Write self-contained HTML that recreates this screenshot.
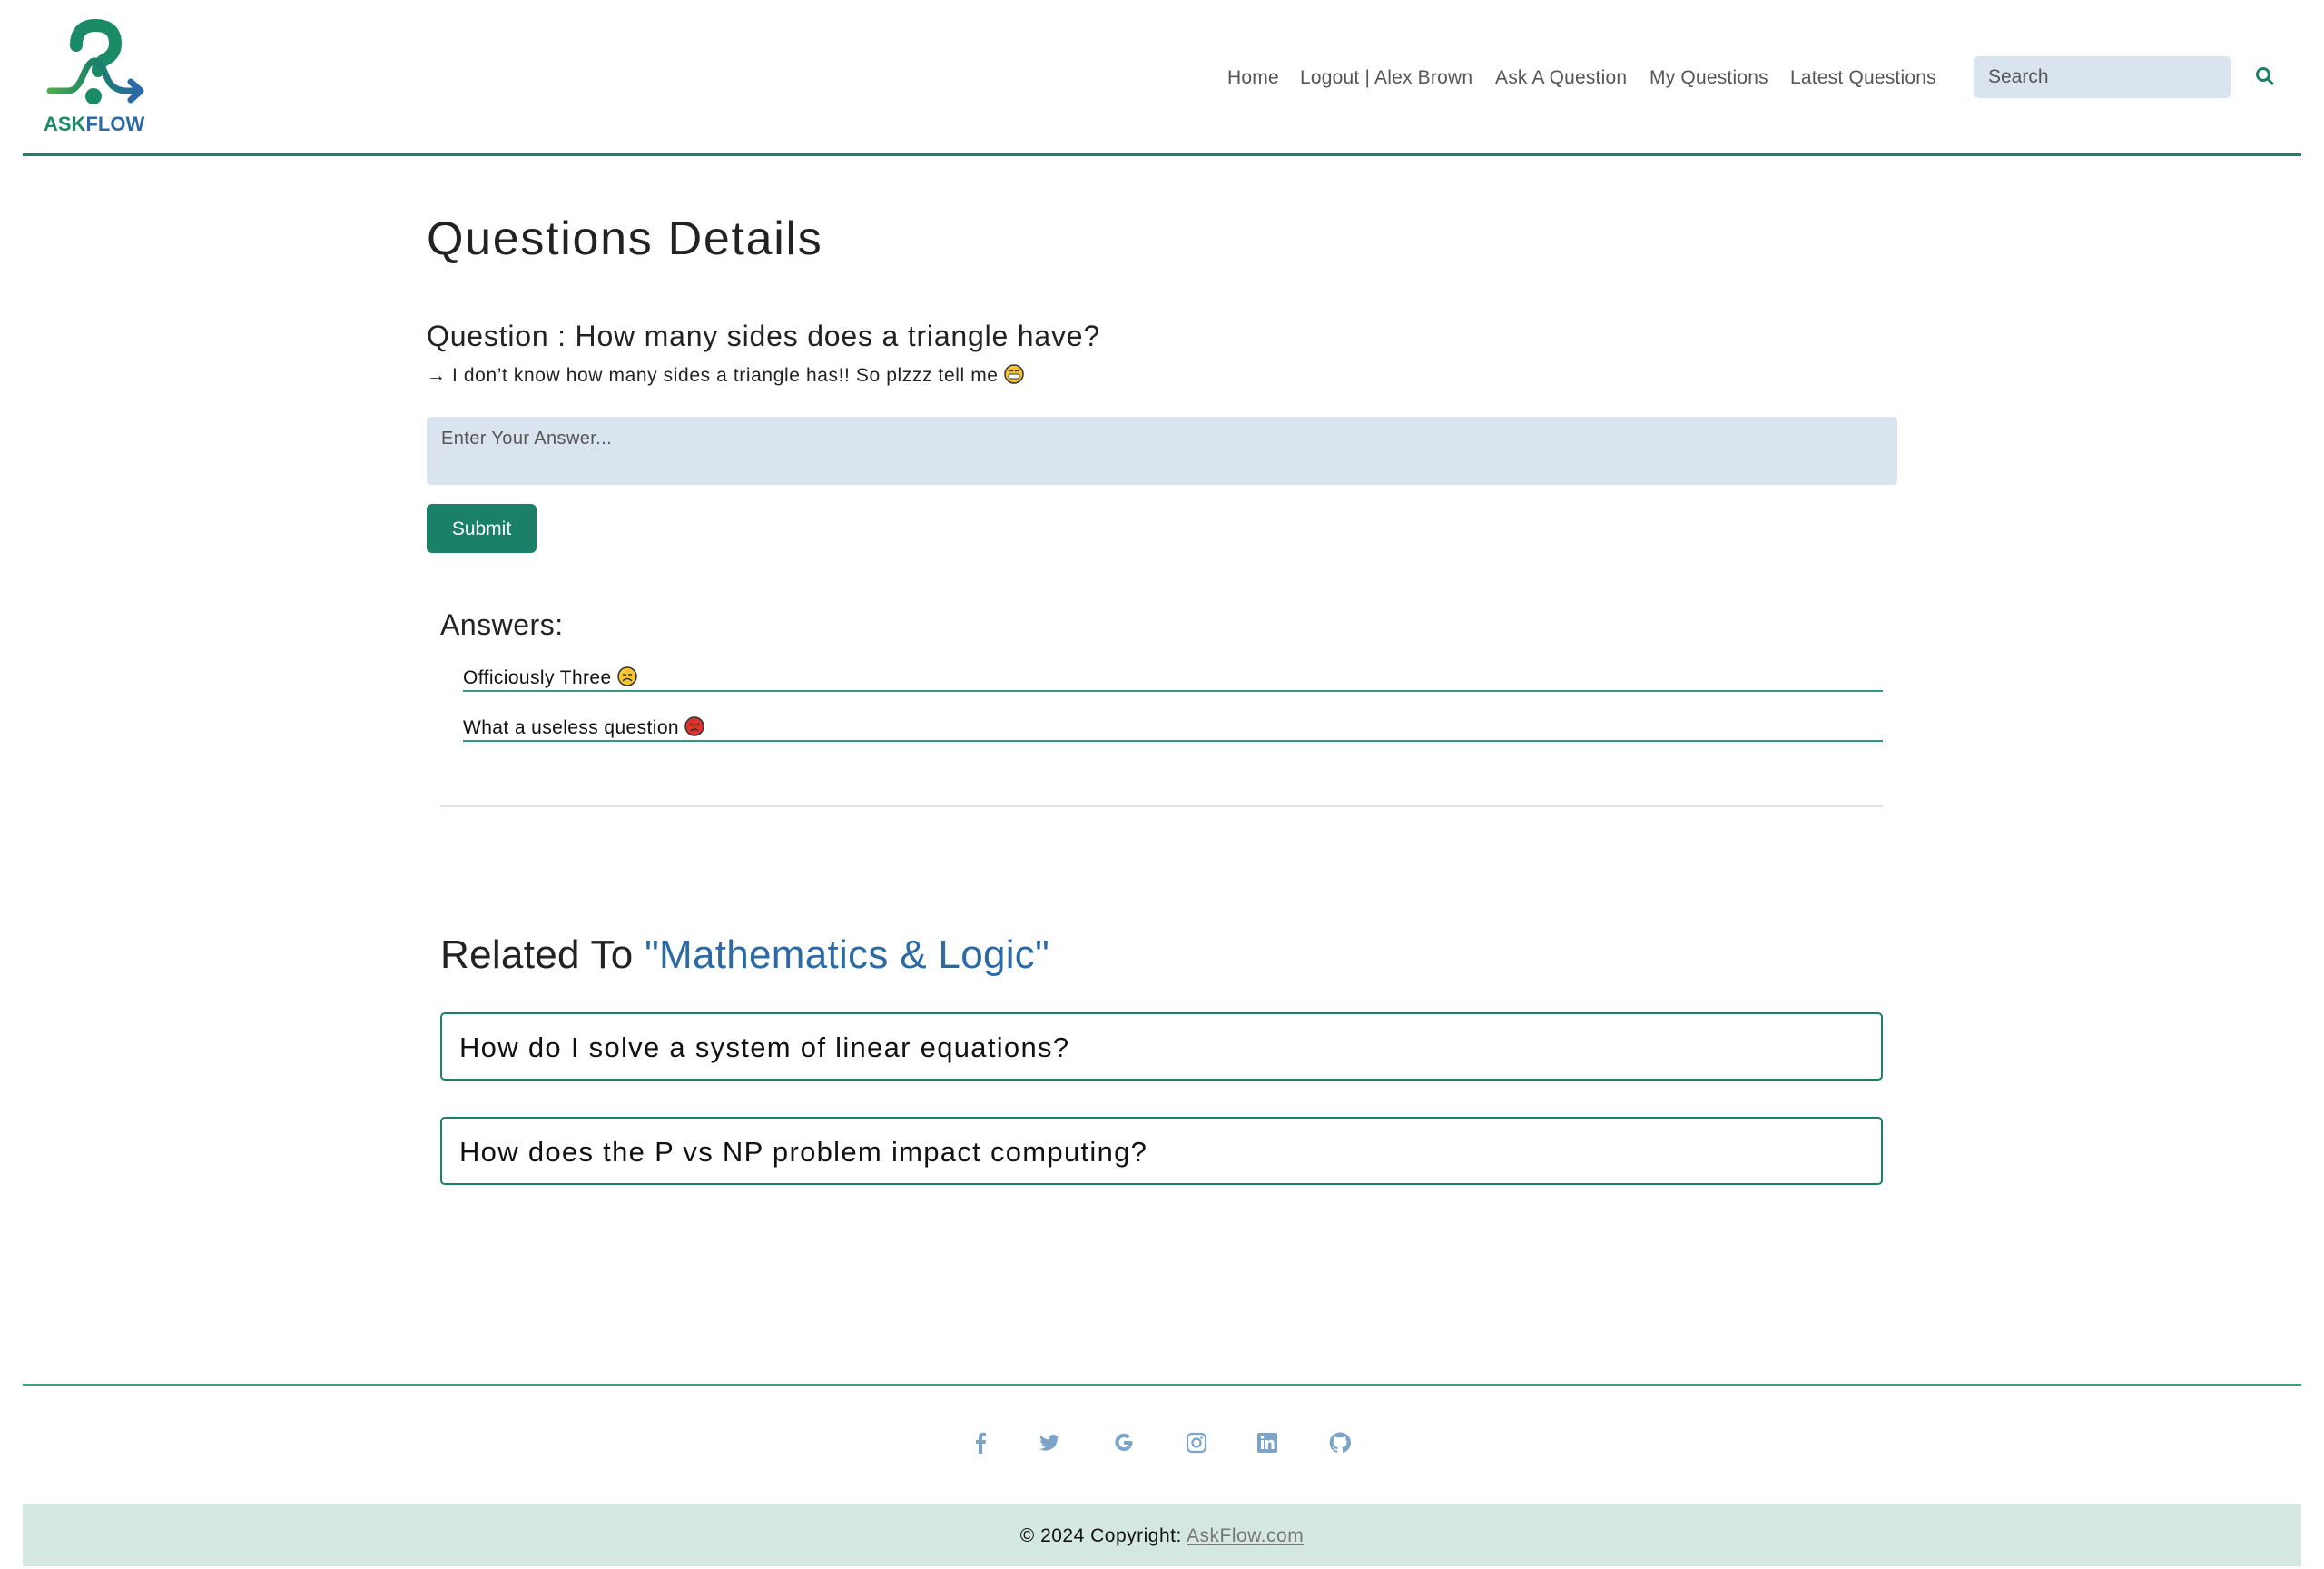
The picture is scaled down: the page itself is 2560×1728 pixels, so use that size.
<!DOCTYPE html>
<html><head><meta charset="utf-8"><style>
*{margin:0;padding:0;box-sizing:border-box}
body{width:2560px;height:1728px;background:#fff;font-family:"Liberation Sans",sans-serif;color:#222;position:relative;overflow:hidden}
.a{position:absolute;white-space:nowrap}
.nav{top:74px;font-size:21px;color:#555;letter-spacing:0.2px}
.emo{display:inline-block;width:22px;height:22px;vertical-align:-3px;margin-left:6px}
.box{position:absolute;left:485px;width:1589px;height:75px;border:2px solid #1b8068;border-radius:5px;font-size:31px;padding-left:19px;line-height:73px;color:#111;letter-spacing:1.3px}
.ic{position:absolute;top:1577px;width:24px;height:24px}
</style></head><body>
<svg class="a" style="left:45px;top:20px" width="120" height="105" viewBox="0 0 120 105">
<defs><linearGradient id="g" x1="0" x2="1"><stop offset="0" stop-color="#4cae4c"/><stop offset=".5" stop-color="#1b8068"/><stop offset="1" stop-color="#2b6aa5"/></linearGradient></defs>
<path d="M39 30 Q39 8 60 8 Q82 8 82 28 Q82 40 70 46 Q63 50 63 58" fill="none" stroke="#1b8a66" stroke-width="14" stroke-linecap="round"/>
<path d="M10 80 H30 Q40 80 47 62 Q55 43 62 48 Q68 52 73 66 Q79 80 95 80 H108" fill="none" stroke="url(#g)" stroke-width="7" stroke-linecap="round"/>
<path d="M99 70 L110 80 L99 90" fill="none" stroke="#2b6aa5" stroke-width="7" stroke-linecap="round" stroke-linejoin="round"/>
<circle cx="58" cy="86" r="9" fill="#1b8a66"/>
</svg>
<div class="a" style="left:48px;top:124px;font-size:22px;font-weight:bold"><span style="color:#1b8a66">ASK</span><span style="color:#2b6aa5">FLOW</span></div>
<div class="a" style="left:25px;top:169px;width:2510px;height:3px;background:#1b8068"></div>
<div class="a nav" style="left:1352px">Home</div>
<div class="a nav" style="left:1432px">Logout | Alex Brown</div>
<div class="a nav" style="left:1647px">Ask A Question</div>
<div class="a nav" style="left:1817px">My Questions</div>
<div class="a nav" style="left:1972px">Latest Questions</div>
<div class="a" style="left:2174px;top:62px;width:284px;height:46px;background:#d9e4ee;border-radius:6px;font-size:21px;color:#555;padding:11px 16px">Search</div>
<svg class="a" style="left:2484px;top:73px" width="22" height="22" viewBox="0 0 22 22"><circle cx="9" cy="9" r="6.5" fill="none" stroke="#1b8068" stroke-width="3"/><path d="M14 14 L19 19" stroke="#1b8068" stroke-width="3" stroke-linecap="round"/></svg>

<div class="a" style="left:470px;top:233px;font-size:52px;color:#222;letter-spacing:1.7px">Questions Details</div>
<div class="a" style="left:470px;top:352px;font-size:32px;color:#222;letter-spacing:0.8px">Question : How many sides does a triangle have?</div>
<div class="a" style="left:470px;top:401px;font-size:21px;color:#222;letter-spacing:0.6px">→ I don’t know how many sides a triangle has!! So plzzz tell me<svg class="emo" viewBox="0 0 22 22"><circle cx="11" cy="11" r="10" fill="#f6c536" stroke="#333" stroke-width="1.5"/><rect x="5" y="11" width="12" height="5" rx="2" fill="#fff" stroke="#333"/><path d="M6 8 q2-2 4 0 M12 8 q2-2 4 0" fill="none" stroke="#333" stroke-width="1.3"/></svg></div>
<div class="a" style="left:470px;top:459px;width:1620px;height:75px;background:#d9e4ee;border-radius:5px;font-size:20px;color:#555;padding:13px 16px;letter-spacing:0.4px">Enter Your Answer...</div>
<div class="a" style="left:470px;top:555px;width:121px;height:54px;background:#1b8068;border-radius:6px;color:#fff;font-size:21px;text-align:center;line-height:56px">Submit</div>

<div class="a" style="left:485px;top:670px;font-size:32px;color:#222;letter-spacing:0.5px">Answers:</div>
<div class="a" style="left:510px;top:734px;font-size:21px;color:#111;letter-spacing:0.4px">Officiously Three<svg class="emo" viewBox="0 0 22 22"><circle cx="11" cy="11" r="10" fill="#f6c536" stroke="#333" stroke-width="1.5"/><path d="M6 16 q5-5 10 0" fill="none" stroke="#333" stroke-width="1.5"/><path d="M6 9 h4 M12 9 h4" stroke="#333" stroke-width="1.5"/></svg></div>
<div class="a" style="left:510px;top:760px;width:1564px;height:2px;background:#2f9a7c"></div>
<div class="a" style="left:510px;top:789px;font-size:21px;color:#111;letter-spacing:0.4px">What a useless question<svg class="emo" viewBox="0 0 22 22"><circle cx="11" cy="11" r="10" fill="#e0322b" stroke="#333" stroke-width="1.5"/><path d="M6 8 l4 2 M16 8 l-4 2 M7 16 q4-4 8 0" fill="none" stroke="#333" stroke-width="1.5"/></svg></div>
<div class="a" style="left:510px;top:815px;width:1564px;height:2px;background:#2f9a7c"></div>
<div class="a" style="left:485px;top:887px;width:1589px;height:2px;background:#e2e2e2"></div>

<div class="a" style="left:485px;top:1027px;font-size:44px;color:#222;letter-spacing:0.3px">Related To <span style="color:#2b6aa5">"Mathematics &amp; Logic"</span></div>
<div class="box" style="top:1115px">How do I solve a system of linear equations?</div>
<div class="box" style="top:1230px">How does the P vs NP problem impact computing?</div>

<div class="a" style="left:25px;top:1524px;width:2510px;height:2px;background:#3aa387"></div>
<svg class="ic" style="left:1068px" viewBox="0 0 24 24"><path d="M14 24V13h3.5l.5-4h-4V6.5c0-1.2.4-2 2-2h2V1c-.4 0-1.6-.2-3-.2-3 0-5 1.8-5 5.1V9H7v4h3v11z" fill="#7ba4c8"/></svg>
<svg class="ic" style="left:1144px" viewBox="0 0 24 24"><path d="M23 5c-.8.4-1.7.6-2.6.7.9-.6 1.6-1.4 2-2.5-.9.5-1.9.9-2.9 1.1A4.5 4.5 0 0 0 11.8 8.4 12.8 12.8 0 0 1 2.5 3.7a4.5 4.5 0 0 0 1.4 6c-.7 0-1.4-.2-2-.6 0 2.2 1.6 4 3.6 4.4-.7.2-1.4.2-2 .1.6 1.8 2.2 3.1 4.2 3.1A9 9 0 0 1 1 18.6 12.8 12.8 0 0 0 20.7 7.2V6.6c.9-.6 1.7-1.4 2.3-2.3z" fill="#7ba4c8"/></svg>
<svg class="ic" style="left:1226px" viewBox="0 0 24 24"><path d="M21 10H12v4h5.2A5.6 5.6 0 1 1 16 7.5l2.9-2.8A9.6 9.6 0 1 0 21.6 12c0-.7 0-1.3-.6-2z" fill="#7ba4c8"/></svg>
<svg class="ic" style="left:1306px" viewBox="0 0 24 24"><rect x="2" y="2" width="20" height="20" rx="5" fill="none" stroke="#7ba4c8" stroke-width="2.2"/><circle cx="12" cy="12" r="4.5" fill="none" stroke="#7ba4c8" stroke-width="2.2"/><circle cx="17.5" cy="6.5" r="1.3" fill="#7ba4c8"/></svg>
<svg class="ic" style="left:1384px" viewBox="0 0 24 24"><rect x="1" y="1" width="22" height="22" rx="2" fill="#7ba4c8"/><rect x="5" y="9" width="3" height="10" fill="#fff"/><circle cx="6.5" cy="5.8" r="1.8" fill="#fff"/><path d="M10 9h3v1.5c.6-1 1.8-1.8 3.3-1.8 2.4 0 3.2 1.5 3.2 4V19h-3v-5.5c0-1.3-.4-2.1-1.6-2.1s-1.900.9-1.900 2.1V19h-3z" fill="#fff"/></svg>
<svg class="ic" style="left:1464px" viewBox="0 0 24 24"><path d="M12 .5a11.5 11.5 0 0 0-3.6 22.4c.6.1.8-.3.8-.6v-2c-3.2.7-3.900-1.500-3.900-1.500-.5-1.300-1.300-1.700-1.300-1.700-1-.7.1-.7.1-.7 1.200.1 1.800 1.200 1.800 1.200 1 1.800 2.800 1.300 3.400 1 .1-.8.4-1.300.7-1.600-2.600-.3-5.300-1.300-5.300-5.700 0-1.300.5-2.300 1.200-3.100-.1-.3-.5-1.500.1-3.100 0 0 1-.3 3.200 1.200a11 11 0 0 1 5.800 0c2.200-1.500 3.200-1.200 3.200-1.200.6 1.600.2 2.800.1 3.100.7.8 1.200 1.800 1.200 3.100 0 4.400-2.700 5.400-5.300 5.700.4.4.8 1.100.8 2.200v3.200c0 .3.2.7.8.6A11.5 11.5 0 0 0 12 .5z" fill="#7ba4c8"/></svg>

<div class="a" style="left:25px;top:1656px;width:2510px;height:69px;background:#d4e8e1;text-align:center;line-height:71px;font-size:21px;color:#111;letter-spacing:0.5px">© 2024 Copyright: <span style="color:#777;text-decoration:underline">AskFlow.com</span></div>
</body></html>
